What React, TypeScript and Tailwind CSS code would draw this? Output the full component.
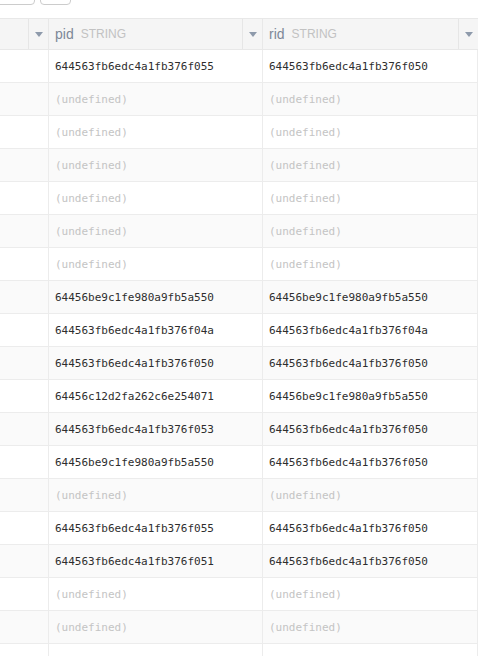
import React from "react";

const U = null;
const rows: [string | null, string | null][] = [
  ["644563fb6edc4a1fb376f055", "644563fb6edc4a1fb376f050"],
  [U, U],
  [U, U],
  [U, U],
  [U, U],
  [U, U],
  [U, U],
  ["64456be9c1fe980a9fb5a550", "64456be9c1fe980a9fb5a550"],
  ["644563fb6edc4a1fb376f04a", "644563fb6edc4a1fb376f04a"],
  ["644563fb6edc4a1fb376f050", "644563fb6edc4a1fb376f050"],
  ["64456c12d2fa262c6e254071", "64456be9c1fe980a9fb5a550"],
  ["644563fb6edc4a1fb376f053", "644563fb6edc4a1fb376f050"],
  ["64456be9c1fe980a9fb5a550", "644563fb6edc4a1fb376f050"],
  [U, U],
  ["644563fb6edc4a1fb376f055", "644563fb6edc4a1fb376f050"],
  ["644563fb6edc4a1fb376f051", "644563fb6edc4a1fb376f050"],
  [U, U],
  [U, U],
  [U, U],
];

function Arrow() {
  return (
    <div className="w-[20px] shrink-0 self-stretch flex items-center justify-center border-l border-[#e6e6e6]">
      <svg width="8" height="5" viewBox="0 0 8 5">
        <path d="M0 0 L8 0 L4 5 Z" fill="#8e9aab" />
      </svg>
    </div>
  );
}

function Cell({ v, w }: { v: string | null; w: string }) {
  return (
    <div className={`${w} flex items-center pl-[6px] pt-[2px] border-r border-[#ececec] overflow-hidden whitespace-nowrap`}>
      {v === null ? (
        <span className="text-[#c4c4c4]">(undefined)</span>
      ) : (
        <span className="text-[#2e2e2e]">{v}</span>
      )}
    </div>
  );
}

export default function App() {
  return (
    <div className="w-[478px] h-[656px] overflow-hidden bg-white" style={{ fontFamily: "'Liberation Sans', Arial, sans-serif" }}>
      <div className="h-[18px] flex items-start overflow-hidden">
        <div className="ml-[-10px] mt-[-20px] w-[45px] h-[25px] border border-[#cccccc] rounded-[4px] bg-white" />
        <div className="ml-[5px] mt-[-20px] w-[31px] h-[25px] border border-[#cccccc] rounded-[4px] bg-white" />
      </div>
      <div className="flex h-[32px] bg-[#f5f5f5] border-t border-b border-[#e8e8e8]">
        <div className="w-[49px] shrink-0 flex border-r border-[#e8e8e8]">
          <div className="w-[29px]" />
          <Arrow />
        </div>
        <div className="w-[214px] shrink-0 flex border-r border-[#e8e8e8]">
          <div className="flex-1 flex items-center pl-[6px] gap-[7px]">
            <span className="text-[14px] text-[#7d8898]">pid</span>
            <span className="text-[12px] text-[#c2c2c2]">STRING</span>
          </div>
          <Arrow />
        </div>
        <div className="w-[215px] shrink-0 flex">
          <div className="flex-1 flex items-center pl-[6px] gap-[7px]">
            <span className="text-[14px] text-[#7d8898]">rid</span>
            <span className="text-[12px] text-[#c2c2c2]">STRING</span>
          </div>
          <Arrow />
        </div>
      </div>
      <div style={{ fontFamily: "'DejaVu Sans Mono', monospace" }} className="text-[11px]">
        {rows.map((r, i) => (
          <div key={i} className={`flex h-[33px] border-b border-[#ececec] ${i % 2 === 1 ? "bg-[#fafafa]" : "bg-white"}`}>
            <div className="w-[49px] shrink-0 border-r border-[#ececec]" />
            <Cell v={r[0]} w="w-[214px] shrink-0" />
            <Cell v={r[1]} w="w-[215px] shrink-0" />
          </div>
        ))}
      </div>
    </div>
  );
}
